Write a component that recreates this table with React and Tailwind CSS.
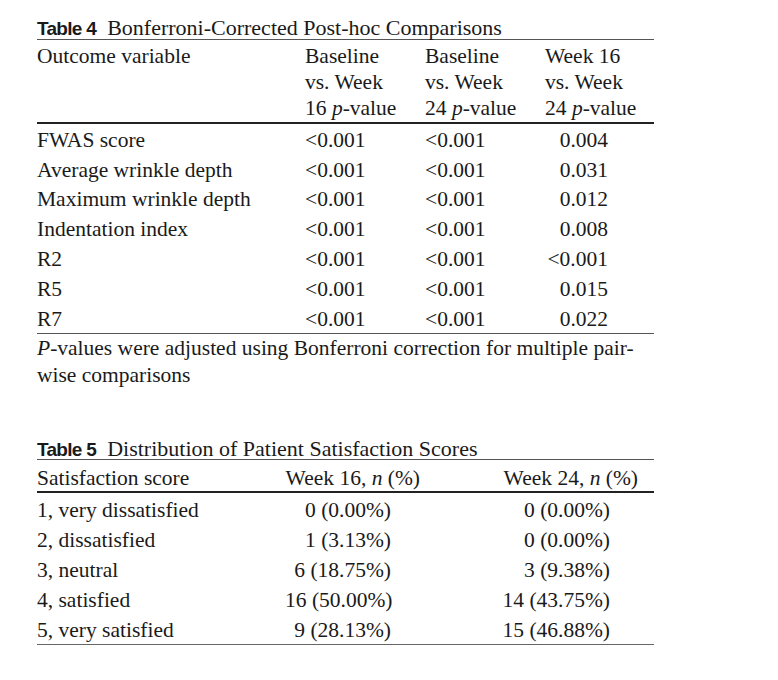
const serif = { fontFamily: '"Liberation Serif", "Times New Roman", serif' };

const t4Rows = [
  ["FWAS score", "<0.001", "<0.001", "0.004"],
  ["Average wrinkle depth", "<0.001", "<0.001", "0.031"],
  ["Maximum wrinkle depth", "<0.001", "<0.001", "0.012"],
  ["Indentation index", "<0.001", "<0.001", "0.008"],
  ["R2", "<0.001", "<0.001", "<0.001"],
  ["R5", "<0.001", "<0.001", "0.015"],
  ["R7", "<0.001", "<0.001", "0.022"],
];

const t5Rows = [
  ["1, very dissatisfied", "0 (0.00%)", "0 (0.00%)"],
  ["2, dissatisfied", "1 (3.13%)", "0 (0.00%)"],
  ["3, neutral", "6 (18.75%)", "3 (9.38%)"],
  ["4, satisfied", "16 (50.00%)", "14 (43.75%)"],
  ["5, very satisfied", "9 (28.13%)", "15 (46.88%)"],
];

const Caption = ({ num, children }) => (
  <div className="flex items-baseline h-[20px] leading-[20px] whitespace-nowrap">
    <span className="font-['Liberation_Sans',Arial,sans-serif] font-bold text-[19px] tracking-[-0.7px] mr-[11px]">
      Table {num}
    </span>
    <span className="text-[22px]">{children}</span>
  </div>
);

export default function App() {
  return (
    <div className="bg-white w-[778px] h-[680px] text-[#1a1a1a] whitespace-nowrap" style={serif}>
      <div className="pl-[37px] pt-[18px] w-[654px]">
        <Caption num="4">Bonferroni-Corrected Post-hoc Comparisons</Caption>
        <div className="border-t border-[#555] mt-[1px]" />
        <div className="flex text-[21.5px] leading-[26px] pt-[3px] pb-[1px]">
          <div className="w-[268px]">Outcome variable</div>
          <div className="w-[120px]">
            Baseline<br />vs. Week<br />16 <i>p</i>-value
          </div>
          <div className="w-[120px]">
            Baseline<br />vs. Week<br />24 <i>p</i>-value
          </div>
          <div className="flex-1">
            Week 16<br />vs. Week<br />24 <i>p</i>-value
          </div>
        </div>
        <div className="border-t-2 border-[#222]" />
        {t4Rows.map((r) => (
          <div key={r[0]} className="flex h-[29.8px] pt-[2px] items-center text-[21.5px]">
            <div className="w-[268px]">{r[0]}</div>
            <div className="w-[120px]">{r[1]}</div>
            <div className="w-[120px]">{r[2]}</div>
            <div className="w-[63px] text-right">{r[3]}</div>
          </div>
        ))}
        <div className="border-t-[1.5px] border-[#555]" />
        <p className="text-[21.5px] leading-[27px] pt-[1px]">
          <i>P</i>-values were adjusted using Bonferroni correction for multiple pair-
          <br />
          wise comparisons
        </p>

        <div className="mt-[50px]">
          <Caption num="5">Distribution of Patient Satisfaction Scores</Caption>
        </div>
        <div className="border-t border-[#555]" />
        <div className="flex h-[31px] pt-[6px] items-center text-[21.5px]">
          <div className="w-[248px]">Satisfaction score</div>
          <div className="w-[135px] text-right">
            Week 16, <i>n</i> (%)
          </div>
          <div className="w-[218px] text-right">
            Week 24, <i>n</i> (%)
          </div>
        </div>
        <div className="border-t-2 border-[#222]" />
        {t5Rows.map((r) => (
          <div key={r[0]} className="flex h-[30px] pt-[6px] items-center text-[21.5px]">
            <div className="w-[248px]">{r[0]}</div>
            <div className="w-[106px] text-right">{r[1]}</div>
            <div className="w-[219px] text-right">{r[2]}</div>
          </div>
        ))}
        <div className="border-t-[1.5px] border-[#666] mt-[1px]" />
      </div>
    </div>
  );
}
